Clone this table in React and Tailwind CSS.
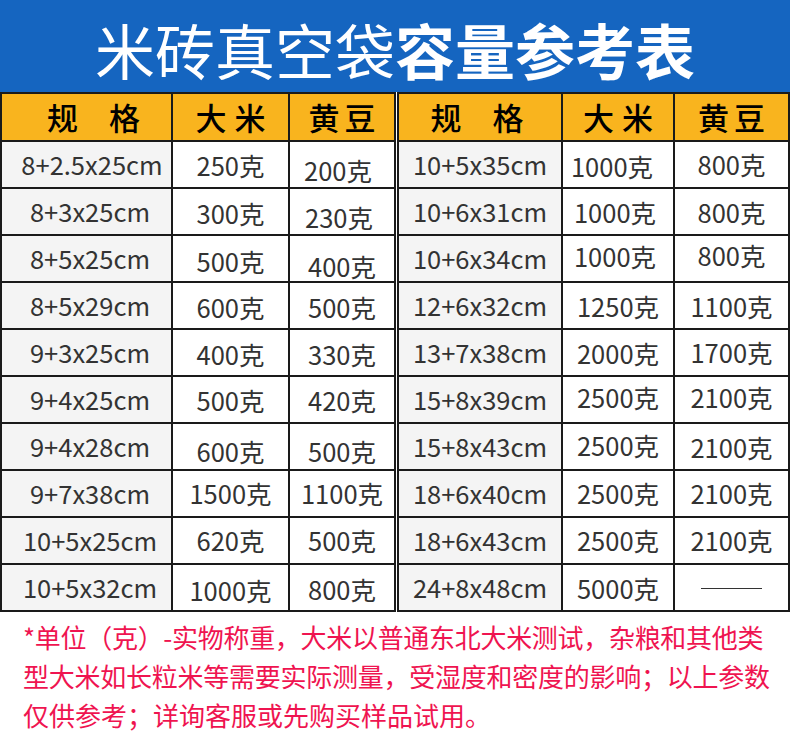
const FONT = "font-['Noto_Sans_CJK_SC','Noto_Sans',sans-serif]";

const leftRows = [
  ['8+2.5x25cm', '250克', '200克', 'translate-x-[2px]', 'translate-y-[1px]', 'translate-y-[6px] -translate-x-[4px]'],
  ['8+3x25cm', '300克', '230克', '', 'translate-y-[2px]', 'translate-y-[6px] -translate-x-[3px]'],
  ['8+5x25cm', '500克', '400克', '', 'translate-y-[3px]', 'translate-y-[8px]'],
  ['8+5x29cm', '600克', '500克', '', 'translate-y-[2px]', 'translate-y-[2px]'],
  ['9+3x25cm', '400克', '330克', '', 'translate-y-[2px]', 'translate-y-[2px]'],
  ['9+4x25cm', '500克', '420克', '', 'translate-y-[1px]', 'translate-y-[1px]'],
  ['9+4x28cm', '600克', '500克', '', 'translate-y-[5px]', 'translate-y-[5px]'],
  ['9+7x38cm', '1500克', '1100克', '', '', ''],
  ['10+5x25cm', '620克', '500克', '', '', ''],
  ['10+5x32cm', '1000克', '800克', '', 'translate-y-[3px]', 'translate-y-[2px]'],
];

const rightRows = [
  ['10+5x35cm', '1000克', '800克', '', 'translate-y-[2px] -translate-x-[6px]', ''],
  ['10+6x31cm', '1000克', '800克', '', 'translate-y-[1px] -translate-x-[3px]', 'translate-y-[1px]'],
  ['10+6x34cm', '1000克', '800克', '', '-translate-y-[2px] -translate-x-[3px]', '-translate-y-[3px]'],
  ['12+6x32cm', '1250克', '1100克', '', 'translate-y-[1px]', 'translate-y-[1px]'],
  ['13+7x38cm', '2000克', '1700克', '', 'translate-y-[1px]', ''],
  ['15+8x39cm', '2500克', '2100克', '', '-translate-y-[2px]', '-translate-y-[2px]'],
  ['15+8x43cm', '2500克', '2100克', '', '-translate-y-[1px]', 'translate-y-[1px]'],
  ['18+6x40cm', '2500克', '2100克', '', '', ''],
  ['18+6x43cm', '2500克', '2100克', '', '', ''],
  ['24+8x48cm', '5000克', null, '', 'translate-y-[1px]', ''],
];

function HeadCell({ children, tracking }) {
  return (
    <div className="flex items-center justify-center border-r-2 border-b-2 border-[#1a1a1a] bg-[#f9b41e] text-[31px] font-medium text-black">
      <span className={tracking}>{children}</span>
    </div>
  );
}

function Cell({ children, gray, extra = '', shift = '' }) {
  return (
    <div
      className={`flex items-center justify-center border-r-2 border-b-2 border-[#1a1a1a] text-[25.5px] text-[#333] ${
        gray ? 'bg-[#f4f4f4]' : 'bg-white'
      } ${extra}`}
    >
      <span className={shift}>{children}</span>
    </div>
  );
}

function Table({ rows, cols, width, specPad, headShift }) {
  return (
    <div className={`grid ${cols} ${width} grid-rows-[48px_repeat(10,47px)] border-t-2 border-l-2 border-[#1a1a1a]`}>
      <HeadCell tracking={headShift}>规　格</HeadCell>
      <HeadCell tracking="tracking-[8px] mr-[-8px]">大米</HeadCell>
      <HeadCell tracking="tracking-[5px] mr-[-5px]">黄豆</HeadCell>
      {rows.map((r) => [
        <Cell key={r[0] + 'a'} gray extra={specPad} shift={r[3]}>
          {r[0]}
        </Cell>,
        <Cell key={r[0] + 'b'} shift={r[4]}>
          {r[1]}
        </Cell>,
        <Cell key={r[0] + 'c'} shift={r[5]}>
          {r[2] ?? <span className="block h-px w-[61px] bg-[#333] translate-y-[1px]" />}
        </Cell>,
      ])}
    </div>
  );
}

export default function App() {
  return (
    <div className={`w-[790px] h-[746px] overflow-hidden bg-white ${FONT}`}>
      <div className="flex h-[92px] items-center justify-center bg-[#1565c0] pt-[5px] text-[60px] leading-none text-white">
        <span className="font-normal">米砖真空袋</span>
        <span className="font-bold">容量参考表</span>
      </div>

      <div className="flex gap-px">
        <Table
          rows={leftRows}
          cols="grid-cols-[171px_117px_106px]"
          width="w-[396px]"
          specPad="pl-[7px]"
          headShift="translate-x-[7px]"
        />
        <Table
          rows={rightRows}
          cols="grid-cols-[164px_112px_115px]"
          width="w-[393px]"
          specPad=""
          headShift="-translate-x-[3px]"
        />
      </div>

      <div className="whitespace-nowrap pl-[23px] pt-[5px] text-[26px] leading-[39px] text-[#ef1450]">
        <div className="tracking-[-0.3px]">*单位（克）-实物称重，大米以普通东北大米测试，杂粮和其他类</div>
        <div className="tracking-[-0.25px]">型大米如长粒米等需要实际测量，受湿度和密度的影响；以上参数</div>
        <div>仅供参考；详询客服或先购买样品试用。</div>
      </div>
    </div>
  );
}
